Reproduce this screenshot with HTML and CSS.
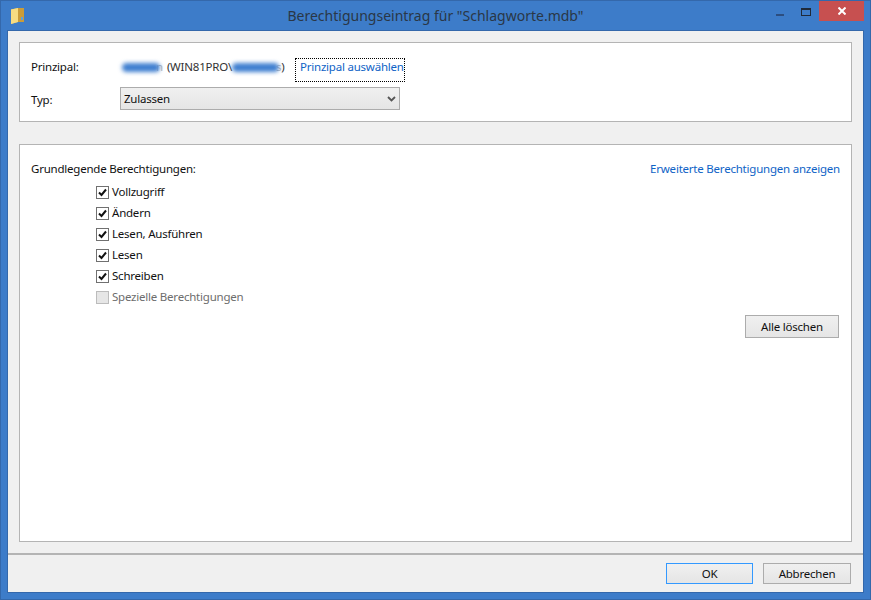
FILE: index.html
```html
<!DOCTYPE html>
<html lang="de">
<head>
<meta charset="utf-8">
<title>Berechtigungseintrag</title>
<link rel="stylesheet" href="styles.css">
</head>
<body>
<div class="window">
  <header class="titlebar">
    <svg class="app-icon" width="13" height="16" viewBox="0 0 13 16">
      <path d="M0 1.5 L7 0 L13 0 L13 14 L7 14 L0 16 Z" fill="#e3bd52"/>
      <path d="M0 1.5 L7 0 L7 14 L0 16 Z" fill="#f6dc82"/>
      <path d="M7 0 L13 0 L13 14 L7 14 Z" fill="#c99c3a"/>
      <rect x="10" y="9" width="2" height="3" fill="#5aa0e0"/>
    </svg>
    <h1 class="title">Berechtigungseintrag für "Schlagworte.mdb"</h1>
    <div class="controls">
      <span class="ctl-min"></span>
      <span class="ctl-max"></span>
      <span class="ctl-close">
        <svg width="8" height="8" viewBox="0 0 8 8"><path d="M0.5 0.5 L7.5 7.5 M7.5 0.5 L0.5 7.5" stroke="#fff" stroke-width="2"/></svg>
      </span>
    </div>
  </header>
  <div class="client">
    <main class="content">
      <section class="panel panel-top">
        <div class="row row-principal">
          <span class="label">Prinzipal:</span>
          <div class="principal">
            <span class="blob blob-a"></span>
            <span class="faint">n</span>
            <span class="domain">(WIN81PRO\</span>
            <span class="blob blob-b"></span>
            <span class="faint">s</span>
            <span>)</span>
          </div>
          <a class="link link-focus">Prinzipal auswählen</a>
        </div>
        <div class="row row-type">
          <span class="label">Typ:</span>
          <div class="select">
            <span>Zulassen</span>
            <svg width="9" height="6" viewBox="0 0 9 6"><path d="M1 1 L4.5 4.5 L8 1" fill="none" stroke="#555" stroke-width="1.8"/></svg>
          </div>
        </div>
      </section>
      <section class="panel panel-main">
        <div class="perm-head">
          <span>Grundlegende Berechtigungen:</span>
          <a class="link">Erweiterte Berechtigungen anzeigen</a>
        </div>
        <ul class="perms">
          <li class="perm"><span class="box"><svg width="11" height="11" viewBox="0 0 11 11"><path d="M2 5.5 L4.5 8 L9 2.5" fill="none" stroke="#111" stroke-width="2"/></svg></span>Vollzugriff</li>
          <li class="perm"><span class="box"><svg width="11" height="11" viewBox="0 0 11 11"><path d="M2 5.5 L4.5 8 L9 2.5" fill="none" stroke="#111" stroke-width="2"/></svg></span>Ändern</li>
          <li class="perm"><span class="box"><svg width="11" height="11" viewBox="0 0 11 11"><path d="M2 5.5 L4.5 8 L9 2.5" fill="none" stroke="#111" stroke-width="2"/></svg></span>Lesen, Ausführen</li>
          <li class="perm"><span class="box"><svg width="11" height="11" viewBox="0 0 11 11"><path d="M2 5.5 L4.5 8 L9 2.5" fill="none" stroke="#111" stroke-width="2"/></svg></span>Lesen</li>
          <li class="perm"><span class="box"><svg width="11" height="11" viewBox="0 0 11 11"><path d="M2 5.5 L4.5 8 L9 2.5" fill="none" stroke="#111" stroke-width="2"/></svg></span>Schreiben</li>
          <li class="perm perm-off"><span class="box"></span>Spezielle Berechtigungen</li>
        </ul>
        <div class="clear-row"><button class="btn btn-clear">Alle löschen</button></div>
      </section>
    </main>
    <footer class="footer">
      <button class="btn btn-ok">OK</button>
      <button class="btn btn-cancel">Abbrechen</button>
    </footer>
  </div>
</div>
</body>
</html>
```

FILE: styles.css
```css
* { box-sizing: border-box; }
html, body { margin: 0; padding: 0; }
body {
  width: 871px;
  height: 600px;
  overflow: hidden;
  font-family: "Noto Sans", "Open Sans", sans-serif;
  font-size: 11.5px;
  letter-spacing: -0.22px;
  color: #111;
}
.window {
  width: 871px;
  height: 600px;
  display: flex;
  flex-direction: column;
  background: #3d7cc9;
  border: 1px solid #3468ab;
  padding: 0 7px 7px;
}
.titlebar {
  height: 30px;
  flex: none;
  display: flex;
  align-items: flex-start;
  position: relative;
}
.app-icon { position: absolute; left: 3px; top: 7px; }
.title {
  margin: 0;
  width: 100%;
  text-align: center;
  font-size: 14px;
  font-weight: 400;
  letter-spacing: 0;
  line-height: 30px;
  color: #2a3746;
}
.controls {
  position: absolute;
  right: -1px;
  top: 0;
  height: 21px;
  display: flex;
}
.ctl-min { position: absolute; right: 80px; top: 13px; width: 8px; height: 2px; background: #2c4e80; }
.ctl-max { position: absolute; right: 53px; top: 7px; width: 10px; height: 8px; border: 1px solid #1f2a3a; border-top-width: 2px; }
.ctl-close {
  position: absolute;
  right: 0;
  top: 0;
  width: 45px;
  height: 20px;
  background: #c75050;
  display: flex;
  align-items: center;
  justify-content: center;
}
.client {
  flex: 1;
  display: flex;
  flex-direction: column;
  background: #f0f0f0;
  outline: 1px solid #3468ab;
}
.content {
  flex: 1;
  display: flex;
  flex-direction: column;
  gap: 22px;
  padding: 11px;
}
.panel {
  background: #fff;
  border: 1px solid #b4b4b4;
}
.panel-top {
  height: 80px;
  flex: none;
  padding: 15px 11px 0;
  display: flex;
  flex-direction: column;
  gap: 5px;
}
.row { display: flex; }
.row-principal { height: 24px; line-height: 18px; align-items: flex-start; }
.row-type { height: 23px; align-items: center; }
.row-type .label { padding-top: 2px; }
.label { width: 89px; flex: none; }
.principal {
  display: flex;
  align-items: center;
  width: 175px;
  height: 18px;
  flex: none;
  padding-left: 2px;
  color: #333;
}
.faint { color: #b9b9b9; }
.blob-a + .faint { margin-left: -4px; }
.blob-b + .faint { margin-left: -3px; }
.domain { margin-left: 4px; }
.blob {
  display: block;
  height: 9px;
  background: #3f7fd0;
  border-radius: 5px;
  filter: blur(2px);
}
.blob-a { width: 38px; }
.blob-b { width: 47px; }
.link { color: #0f63c6; white-space: nowrap; }
.link-focus {
  width: 110px;
  height: 24px;
  padding-left: 5px;
  outline: 1px dotted #000;
  outline-offset: -1px;
  display: flex;
  align-items: flex-start;
}
.select {
  width: 280px;
  height: 23px;
  border: 1px solid #acacac;
  background: linear-gradient(#f0f0f0, #e5e5e5);
  display: flex;
  align-items: center;
  justify-content: space-between;
  padding: 0 3px 0 3px;
}
.panel-main {
  flex: 1;
  padding: 14px 11px 0;
  display: flex;
  flex-direction: column;
}
.perm-head {
  display: flex;
  justify-content: space-between;
  height: 18px;
  align-items: center;
}
.perms {
  list-style: none;
  margin: 4px 0 0;
  padding: 0 0 0 65px;
  display: flex;
  flex-direction: column;
}
.perm {
  height: 21px;
  line-height: 21px;
  display: flex;
  align-items: flex-start;
  gap: 3px;
}
.box {
  width: 13px;
  height: 13px;
  margin-top: 5px;
  border: 1px solid #707070;
  background: #fff;
  display: flex;
  align-items: center;
  justify-content: center;
  flex: none;
}
.perm-off { color: #6d6d6d; }
.perm-off .box { background: #e6e6e6; border-color: #bcbcbc; }
.clear-row { display: flex; justify-content: flex-end; padding: 8px 1px 0 0; }
.btn {
  font: inherit;
  letter-spacing: inherit;
  color: #111;
  height: 21px;
  padding: 0;
  background: linear-gradient(#f0f0f0, #e5e5e5);
  border: 1px solid #acacac;
}
.btn-clear { width: 94px; height: 23px; }
.footer {
  flex: none;
  height: 39px;
  border-top: 2px solid #b4b4b4;
  display: flex;
  justify-content: flex-end;
  gap: 10px;
  padding: 8px 12px 0 0;
}
.btn-ok { width: 87px; border-color: #3399ff; }
.btn-cancel { width: 88px; }
```
